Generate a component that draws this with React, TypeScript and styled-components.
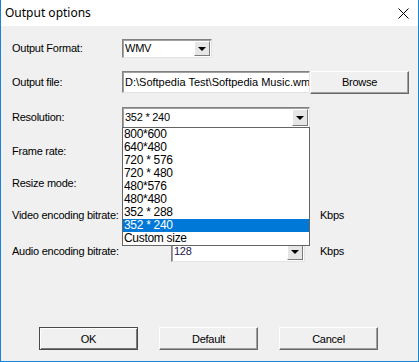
import React from "react";
import styled, { createGlobalStyle, css } from "styled-components";

const GlobalStyle = createGlobalStyle`
  html, body { margin: 0; padding: 0; background: #f0f0f0; }
  * { box-sizing: border-box; }
`;

const Window = styled.div`
  width: 419px;
  height: 362px;
  display: flex;
  flex-direction: column;
  border-left: 1px solid #1883d7;
  border-right: 1px solid #1883d7;
  border-bottom: 1px solid #1883d7;
  background: #f0f0f0;
  font-family: "Liberation Sans", Arial, sans-serif;
  font-size: 11px;
  letter-spacing: -0.25px;
  color: #000;
`;

const TitleBar = styled.div`
  height: 26px;
  flex: none;
  background: #fff;
  display: flex;
  align-items: center;
  justify-content: space-between;
  padding: 0 9px 0 4px;
`;

const Title = styled.span`
  font-family: "Noto Sans", "Open Sans", sans-serif;
  font-size: 12px;
  letter-spacing: 0;
  margin-top: -1px;
`;

const Body = styled.div`
  flex: 1;
  display: flex;
  flex-direction: column;
`;

const Row = styled.div<{ $top: number }>`
  display: flex;
  align-items: center;
  height: 22px;
  margin-top: ${(p) => p.$top}px;
  padding-left: 11px;
`;

const Label = styled.div<{ $w: number }>`
  width: ${(p) => p.$w}px;
  flex: none;
  white-space: nowrap;
`;

const sunken = css`
  background: #fff;
  border: 1px solid;
  border-color: #828282 #e3e3e3 #e3e3e3 #828282;
  box-shadow: inset 1px 1px 0 #a0a0a0;
`;

const ComboBox = styled.div<{ $w: number; $h: number }>`
  ${sunken}
  position: relative;
  width: ${(p) => p.$w}px;
  height: ${(p) => p.$h}px;
  display: flex;
  align-items: center;
  padding-left: 2px;
  flex: none;
`;

const ComboValue = styled.span<{ $color?: string }>`
  flex: 1;
  color: ${(p) => p.$color || "#000"};
  white-space: nowrap;
  overflow: hidden;
`;

const ArrowBtn = styled.div`
  width: 16px;
  align-self: stretch;
  margin: 1px 1px 1px 0;
  background: #e6e6e6;
  border: 1px solid;
  border-color: #fff #7a7a7a #7a7a7a #fff;
  display: flex;
  align-items: center;
  justify-content: center;
`;

const Triangle = styled.div`
  width: 0;
  height: 0;
  border-left: 4px solid transparent;
  border-right: 4px solid transparent;
  border-top: 4px solid #000;
  margin-top: 1px;
`;

const TextField = styled.div<{ $w: number; $h: number }>`
  ${sunken}
  width: ${(p) => p.$w}px;
  height: ${(p) => p.$h}px;
  display: flex;
  align-items: center;
  padding-left: 2px;
  white-space: nowrap;
  overflow: hidden;
  letter-spacing: 0;
  flex: none;
`;

const Button = styled.button<{ $default?: boolean; $w: number; $h: number }>`
  width: ${(p) => p.$w}px;
  height: ${(p) => p.$h}px;
  flex: none;
  font-family: "Liberation Sans", Arial, sans-serif;
  font-size: 11px;
  letter-spacing: -0.25px;
  color: #000;
  background: #f0f0f0;
  padding: 0;
  border: 1px solid;
  border-color: #fff #696969 #696969 #fff;
  box-shadow: inset -1px -1px 0 #a0a0a0;
  ${(p) =>
    p.$default &&
    css`
      border-color: #4a4a4a;
      box-shadow: inset 1px 1px 0 #fff, inset -1px -1px 0 #7a7a7a;
    `}
`;

const DropList = styled.div`
  position: absolute;
  top: 100%;
  left: -1px;
  width: 188px;
  z-index: 5;
  background: #fff;
  border: 1px solid #646464;
  display: flex;
  flex-direction: column;
`;

const DropItem = styled.div<{ $sel?: boolean }>`
  height: 13px;
  line-height: 13px;
  padding-left: 1px;
  font-size: 12px;
  letter-spacing: -0.3px;
  white-space: nowrap;
  background: ${(p) => (p.$sel ? "#0078d7" : "#fff")};
  color: ${(p) => (p.$sel ? "#fff" : "#000")};
`;

const Unit = styled.span`
  margin-left: 15px;
`;

const ButtonBar = styled.div`
  margin-top: auto;
  margin-bottom: 11px;
  display: flex;
  gap: 21px;
  padding-left: 38px;
`;

const resolutions = [
  "800*600",
  "640*480",
  "720 * 576",
  "720 * 480",
  "480*576",
  "480*480",
  "352 * 288",
  "352 * 240",
  "Custom size",
];

const Arrow = () => (
  <ArrowBtn>
    <Triangle />
  </ArrowBtn>
);

export default function App() {
  return (
    <>
      <GlobalStyle />
      <Window>
        <TitleBar>
          <Title>Output options</Title>
          <svg width="11" height="11" viewBox="0 0 11 11">
            <path d="M0.5 0.5 L10.5 10.5 M10.5 0.5 L0.5 10.5" stroke="#000" strokeWidth="1" fill="none" />
          </svg>
        </TitleBar>
        <Body>
          <Row $top={11}>
            <Label $w={110}>Output Format:</Label>
            <ComboBox $w={90} $h={19}>
              <ComboValue>WMV</ComboValue>
              <Arrow />
            </ComboBox>
          </Row>
          <Row $top={12}>
            <Label $w={110}>Output file:</Label>
            <TextField $w={188} $h={22}>D:\Softpedia Test\Softpedia Music.wm</TextField>
            <Button $w={99} $h={23}>Browse</Button>
          </Row>
          <Row $top={13}>
            <Label $w={110}>Resolution:</Label>
            <ComboBox $w={188} $h={21}>
              <ComboValue>352 * 240</ComboValue>
              <Arrow />
              <DropList>
                {resolutions.map((r) => (
                  <DropItem key={r} $sel={r === "352 * 240"}>
                    {r}
                  </DropItem>
                ))}
              </DropList>
            </ComboBox>
          </Row>
          <Row $top={12}>
            <Label $w={110}>Frame rate:</Label>
            <ComboBox $w={188} $h={21}>
              <Arrow />
            </ComboBox>
          </Row>
          <Row $top={10}>
            <Label $w={110}>Resize mode:</Label>
            <ComboBox $w={188} $h={21}>
              <Arrow />
            </ComboBox>
          </Row>
          <Row $top={10}>
            <Label $w={159}>Video encoding bitrate:</Label>
            <ComboBox $w={134} $h={21}>
              <Arrow />
            </ComboBox>
            <Unit>Kbps</Unit>
          </Row>
          <Row $top={14}>
            <Label $w={159}>Audio encoding bitrate:</Label>
            <ComboBox $w={134} $h={21}>
              <ComboValue $color="#24184f">128</ComboValue>
              <Arrow />
            </ComboBox>
            <Unit>Kbps</Unit>
          </Row>
          <ButtonBar>
            <Button $default $w={99} $h={23}>OK</Button>
            <Button $w={99} $h={23}>Default</Button>
            <Button $w={99} $h={23}>Cancel</Button>
          </ButtonBar>
        </Body>
      </Window>
    </>
  );
}
